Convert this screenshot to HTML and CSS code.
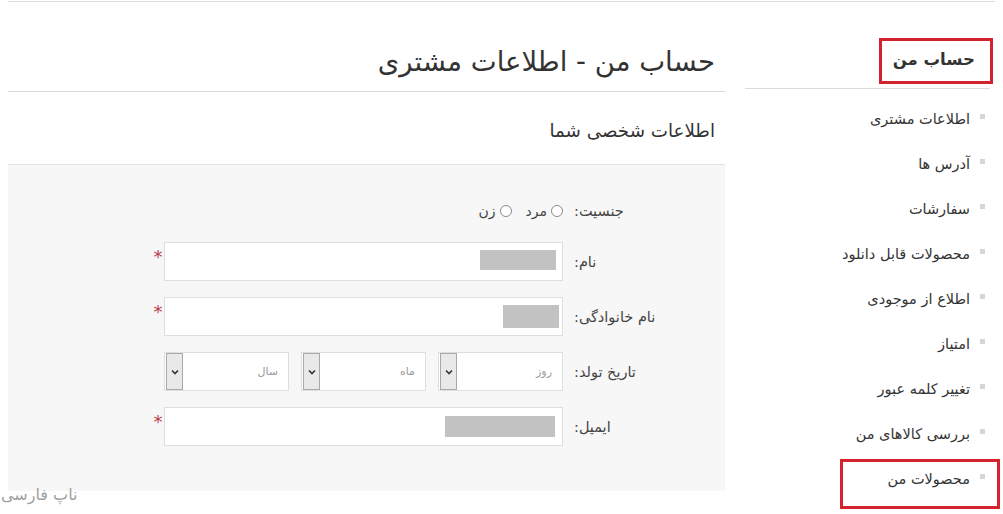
FILE: index.html
```html
<!DOCTYPE html>
<html lang="fa" dir="rtl">
<head>
<meta charset="utf-8">
<link rel="stylesheet" href="styles.css">
</head>
<body>
<div class="topline"></div>
<div class="page">
  <aside class="sidebar">
    <div class="side-title"><span>حساب من</span></div>
    <ul class="side-menu">
      <li>اطلاعات مشتری</li>
      <li>آدرس ها</li>
      <li>سفارشات</li>
      <li>محصولات قابل دانلود</li>
      <li>اطلاع از موجودی</li>
      <li>امتیاز</li>
      <li>تغییر کلمه عبور</li>
      <li>بررسی کالاهای من</li>
      <li>محصولات من</li>
    </ul>
    <div class="mark mark-title"></div>
    <div class="mark mark-item"></div>
  </aside>
  <main class="content">
    <h1 class="page-title">حساب من - اطلاعات مشتری</h1>
    <h2 class="section-title">اطلاعات شخصی شما</h2>
    <div class="form-box">
      <div class="row row-gender">
        <div class="label">جنسیت:</div>
        <div class="radios">
          <span class="radio"></span><span class="radio-text">مرد</span>
          <span class="radio"></span><span class="radio-text">زن</span>
        </div>
      </div>
      <div class="row">
        <div class="label">نام:</div>
        <div class="field"><span class="mask mask-first"></span></div>
        <span class="req">*</span>
      </div>
      <div class="row">
        <div class="label">نام خانوادگی:</div>
        <div class="field"><span class="mask mask-last"></span></div>
        <span class="req">*</span>
      </div>
      <div class="row">
        <div class="label">تاریخ تولد:</div>
        <div class="selects">
          <div class="select"><span class="ph">روز</span><span class="drop"><svg width="8" height="6" viewBox="0 0 8 6"><path d="M1 1.5 L4 4.5 L7 1.5" fill="none" stroke="#333" stroke-width="1.6"/></svg></span></div>
          <div class="select"><span class="ph">ماه</span><span class="drop"><svg width="8" height="6" viewBox="0 0 8 6"><path d="M1 1.5 L4 4.5 L7 1.5" fill="none" stroke="#333" stroke-width="1.6"/></svg></span></div>
          <div class="select"><span class="ph">سال</span><span class="drop"><svg width="8" height="6" viewBox="0 0 8 6"><path d="M1 1.5 L4 4.5 L7 1.5" fill="none" stroke="#333" stroke-width="1.6"/></svg></span></div>
        </div>
        <span class="req req-blank"></span>
      </div>
      <div class="row">
        <div class="label">ایمیل:</div>
        <div class="field"><span class="mask mask-email"></span></div>
        <span class="req">*</span>
      </div>
    </div>
  </main>
</div>
<div class="watermark">ناپ فارسی</div>
</body>
</html>
```
FILE: styles.css
```css
* { box-sizing: border-box; }
html, body { margin: 0; padding: 0; background: #fff; }
body {
  font-family: "DejaVu Sans", "Noto Sans", sans-serif;
  color: #333;
  width: 1003px;
  height: 514px;
  overflow: hidden;
  position: relative;
}
.topline {
  margin: 1px 8px 0 8px;
  border-top: 1px solid #dcdcdc;
}
.page {
  display: flex;
  gap: 20px;
  padding: 0 3px 0 8px;
}
.sidebar {
  width: 255px;
  flex: none;
  position: relative;
}
.side-title {
  margin-right: 10px;
  padding: 43px 15px 0 0;
  height: 87px;
  border-bottom: 1px solid #dcdcdc;
  font-size: 16.5px;
  font-weight: bold;
  line-height: 30px;
  color: #333;
}
.side-menu {
  list-style: none;
  margin: 0;
  padding: 8px 15px 0 0;
}
.side-menu li {
  height: 45px;
  line-height: 45px;
  font-size: 14.5px;
  color: #333;
  display: flex;
  align-items: center;
  gap: 10px;
}
.side-menu li::before {
  content: "";
  width: 5px;
  height: 5px;
  background: #d6d6d6;
  flex: none;
  margin-top: -6px;
}
.mark {
  position: absolute;
  border: 3px solid #d2232f;
}
.mark-title { top: 36px; right: 7px; width: 114px; height: 46px; }
.mark-item { top: 457px; right: 0; width: 160px; height: 50px; }
.content {
  width: 717px;
  flex: none;
}
.page-title {
  margin: 0;
  height: 90px;
  padding: 42px 10px 0 0;
  font-size: 27.5px;
  font-weight: normal;
  line-height: 34px;
  color: #333;
  border-bottom: 1px solid #dcdcdc;
}
.section-title {
  margin: 0;
  height: 73px;
  padding: 27px 10px 0 0;
  font-size: 18.3px;
  font-weight: normal;
  line-height: 24px;
  color: #333;
  border-bottom: 1px solid #e4e4e4;
}
.form-box {
  background: #f7f7f7;
  height: 326px;
  padding: 31px 51px 0 0;
  display: flex;
  flex-direction: column;
  gap: 16px;
}
.row {
  display: flex;
  align-items: center;
  height: 39px;
}
.row-gender { height: 30px; }
.label {
  width: 111px;
  flex: none;
  text-align: left;
  font-size: 14.5px;
  color: #444;
  padding-left: 11px;
}
.radios {
  display: flex;
  align-items: center;
  font-size: 14px;
  color: #444;
}
.radio {
  width: 12px;
  height: 12px;
  border: 1px solid #8a8a8a;
  border-radius: 50%;
  background: #fff;
  flex: none;
}
.radio-text { margin: 0 4px 0 14px; }
.radio-text:last-child { margin-left: 0; }
.field {
  width: 399px;
  height: 39px;
  flex: none;
  background: #fff;
  border: 1px solid #dedede;
  display: flex;
  align-items: center;
}
.mask { background: #c2c2c2; display: block; }
.mask-first { width: 76px; height: 20px; margin: -4px 6px 0 0; }
.mask-last { width: 56px; height: 23px; margin: 0 3px 0 0; }
.mask-email { width: 110px; height: 21px; margin: 0 7px 0 0; }
.req {
  width: 12px;
  align-self: flex-start;
  margin: 6px 0 0 0;
  color: #b7414f;
  font-size: 18px;
  line-height: 18px;
  text-align: center;
}
.selects {
  display: flex;
  gap: 12px;
  width: 399px;
  flex: none;
}
.select {
  width: 125px;
  height: 39px;
  background: #fff;
  border: 1px solid #dedede;
  display: flex;
  align-items: center;
  justify-content: space-between;
}
.ph {
  font-size: 11px;
  color: #9a9a9a;
  padding-right: 10px;
}
.drop {
  width: 17px;
  height: 37px;
  margin-left: 1px;
  background: #e9e9e9;
  border: 1px solid #a9a9a9;
  display: flex;
  align-items: center;
  justify-content: center;
}
.watermark {
  position: absolute;
  left: 1px;
  top: 485px;
  font-size: 16px;
  color: #a0a0a0;
}
```
